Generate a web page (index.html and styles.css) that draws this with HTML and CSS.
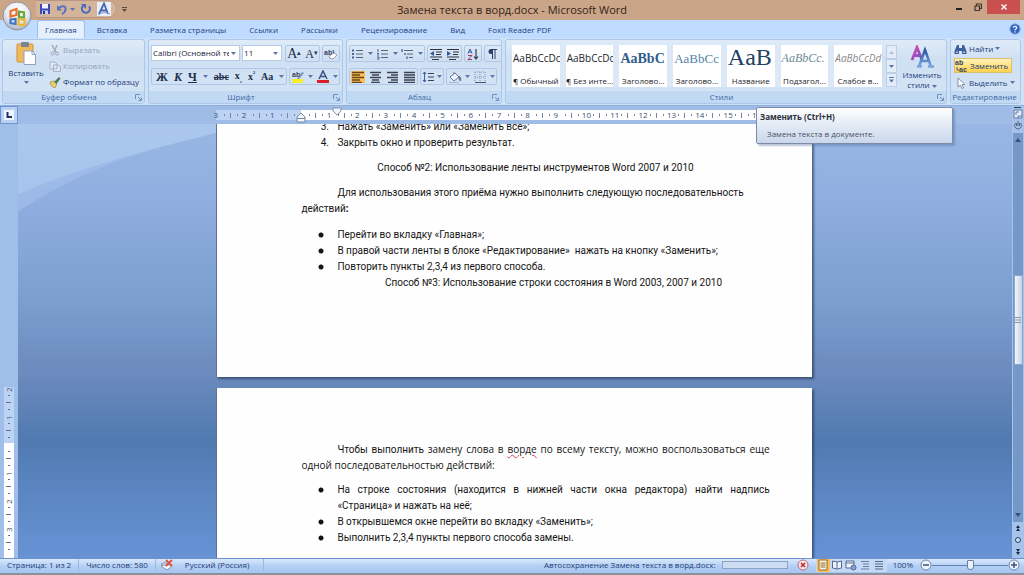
FILE: index.html
```html
<!DOCTYPE html>
<html lang="ru">
<head>
<meta charset="utf-8">
<title>Замена текста в ворд.docx - Microsoft Word</title>
<link rel="stylesheet" href="styles.css">
</head>
<body>
<svg class="defs" aria-hidden="true">
  <defs>
    <linearGradient id="purple" x1="0" y1="0" x2="1" y2="1"><stop offset="0" stop-color="#d846b4"/><stop offset="1" stop-color="#6a55c0"/></linearGradient>
    <linearGradient id="blue" x1="0" y1="0" x2="0" y2="1"><stop offset="0" stop-color="#2a56a8"/><stop offset="1" stop-color="#7ba6e0"/></linearGradient>
    <radialGradient id="orb" cx=".5" cy=".3" r=".7"><stop offset="0" stop-color="#ffffff"/><stop offset=".6" stop-color="#e6e8ee"/><stop offset="1" stop-color="#a9b0c0"/></radialGradient>
    <symbol id="caret" viewBox="0 0 5 3"><path d="M0 0h5L2.500 3z" fill="#5876a6"/></symbol>
    <symbol id="launch" viewBox="0 0 7 7"><path d="M.5 5V.5H5M3 3l3 3M6.500 3.500v3h-3" fill="none" stroke="#6f8fbd"/></symbol>
  </defs>
</svg>

<header class="titlebar">
  <button class="office" aria-label="Кнопка Office">
    <svg viewBox="0 0 30 30" width="30" height="30"><circle cx="15" cy="15" r="14" fill="url(#orb)" stroke="#8f93a3"/><g fill="none" stroke-width="2.200"><path d="M8.500 10l6-2v6l-6 1.500z" stroke="#e8702c"/><path d="M17 10.500l5 1v5l-5-.5z" stroke="#6aa53c"/><path d="M8.500 18.500l5-.5v5l-5-1z" stroke="#3c76c8"/><path d="M16.500 18l6 1v5l-6-.5z" stroke="#eeb62c"/></g></svg>
  </button>
  <div class="quick">
    <button aria-label="Сохранить"><svg viewBox="0 0 12 12" width="12" height="12"><path d="M1 1h10v10H1z" fill="#3c48b4"/><path d="M3 1h6v4.500H3z" fill="#eef3ff"/><path d="M3 7.500h6V11H3z" fill="#c9d2f0"/><path d="M4 8h2v3H4z" fill="#2b3488"/></svg></button>
    <button aria-label="Отменить" class="undo"><svg viewBox="0 0 12 12" width="12" height="12"><path d="M3 5c3-3 7-2 6.500 1.500C9.300 8.500 8 10 6 11" fill="none" stroke="#5a72c4" stroke-width="2"/><path d="M1 2v5.500h5z" fill="#5a72c4"/></svg><svg width="5" height="3"><use href="#caret"/></svg></button>
    <button aria-label="Повторить"><svg viewBox="0 0 12 12" width="12" height="12"><path d="M3 3a4 4 0 1 0 6 .3" fill="none" stroke="#4a68bd" stroke-width="2"/><path d="M1 1h5v5z" fill="#4a68bd"/></svg></button>
    <button aria-label="Стиль" class="on"><svg viewBox="0 0 14 14" width="14" height="14"><path d="M2 12L7 1.500 11 12M4 8.500h6" fill="none" stroke="#4468b0" stroke-width="1.800"/><path d="M1 13c4-3 8-3 12-1" fill="none" stroke="#7f9fd0"/></svg></button>
  </div>
  <button class="more" aria-label="Настройка панели"><svg viewBox="0 0 5 5" width="5" height="5"><path d="M0 .5h5" stroke="#5b4a44"/><path d="M0 2h5L2.500 5z" fill="#5b4a44"/></svg></button>
  <h1>Замена текста в ворд.docx - Microsoft Word</h1>
  <div class="winbtns">
    <button aria-label="Свернуть"><svg viewBox="0 0 8 8" width="8" height="8"><path d="M1 6h6" stroke="#222" stroke-width="2"/></svg></button>
    <button aria-label="Восстановить"><svg viewBox="0 0 8 8" width="8" height="8"><path d="M1 3h4.500v4.500H1zM2.500 3V1h5v4.500h-2" fill="none" stroke="#42352e" stroke-width="1.200"/></svg></button>
    <button aria-label="Закрыть" class="close"><svg viewBox="0 0 8 8" width="8" height="8"><path d="M1.500 1.500l5 5m0-5l-5 5" stroke="#fff" stroke-width="1.400"/></svg></button>
  </div>
</header>

<nav class="tabs">
  <a href="#" class="active">Главная</a><a href="#">Вставка</a><a href="#">Разметка страницы</a><a href="#">Ссылки</a><a href="#">Рассылки</a><a href="#">Рецензирование</a><a href="#">Вид</a><a href="#">Foxit Reader PDF</a>
  <button class="help" aria-label="Справка"><svg viewBox="0 0 12 12" width="12" height="12"><circle cx="6" cy="6" r="5.200" fill="#3465c0" stroke="#8fb0e6"/><path d="M4.300 4.800C4.300 2.800 8 2.900 7.700 5 7.500 6 6 6 6 7.300M6 8.200v1.200" fill="none" stroke="#fff" stroke-width="1.200"/></svg></button>
</nav>

<main class="ribbon">
  <section class="group">
    <div class="body clip">
      <button class="paste"><svg viewBox="0 0 20 23" width="20" height="23"><rect x="1" y="2" width="16" height="18" rx="1" fill="#f0b95a" stroke="#cf9238"/><rect x="5" y="0" width="8" height="5" rx="1" fill="#7b8494"/><path d="M8 9h8l3.500 3.500V22.500H8z" fill="#fff" stroke="#8ba2c8"/><path d="M16 9v3.500h3.500" fill="none" stroke="#8ba2c8"/></svg><span>Вставить</span><svg width="5" height="3"><use href="#caret"/></svg></button>
      <div class="stack">
        <button class="off"><svg viewBox="0 0 12 12" width="12" height="12"><path d="M3 1l4 7M8 1L5 8" stroke="#9ca7b8" stroke-width="1.300"/><circle cx="3.500" cy="9.500" r="1.500" fill="none" stroke="#9ca7b8"/><circle cx="8" cy="9.500" r="1.500" fill="none" stroke="#9ca7b8"/></svg>Вырезать</button>
        <button class="off"><svg viewBox="0 0 12 12" width="12" height="12"><path d="M1 2h5l2 2v5H1zM4.500 5h5l2 2v4.500h-7z" fill="#dfe8f4" stroke="#a5b3c8"/></svg>Копировать</button>
        <button><svg viewBox="0 0 12 12" width="12" height="12"><path d="M1 6l4-1 3 3-2 4C3 11 1 9 1 6z" fill="#e9cf6a" stroke="#9a8644" stroke-width=".7"/><path d="M5 6l5-5 1.500 1.500L7.500 8z" fill="#4f7a55"/></svg>Формат по образцу</button>
      </div>
    </div>
    <footer><span>Буфер обмена</span><svg width="7" height="7"><use href="#launch"/></svg></footer>
  </section>

  <section class="group">
    <div class="body rows">
      <div class="row">
        <span class="combo face"><select aria-label="Шрифт"><option>Calibri (Основной текст)</option></select><svg width="5" height="3"><use href="#caret"/></svg></span>
        <span class="combo size"><select aria-label="Размер"><option>11</option></select><svg width="5" height="3"><use href="#caret"/></svg></span>
        <span class="set push"><button class="serif big" aria-label="Увеличить размер">A<sup>▴</sup></button><button class="serif" aria-label="Уменьшить размер">A<sup>▾</sup></button></span>
        <span class="set"><button aria-label="Очистить формат"><svg viewBox="0 0 14 12" width="14" height="12"><text x="0" y="7" class="tiny">ab)</text><path d="M5 8l5-3 3 2-4 4-3-.5z" fill="#fff" stroke="#8390a8" stroke-width=".8"/></svg></button></span>
      </div>
      <div class="row">
        <span class="set wide"><button class="serif"><b>Ж</b></button><button class="serif"><b><i class="slant">К</i></b></button><button class="serif"><b><u>Ч</u></b></button><svg width="5" height="3"><use href="#caret"/></svg><button class="serif small"><b><s>abc</s></b></button><button class="serif small"><b>x<sub>₂</sub></b></button><button class="serif small"><b>x<sup>²</sup></b></button><button class="serif small"><b>Aa</b></button><svg width="5" height="3"><use href="#caret"/></svg></span>
        <span class="set"><button aria-label="Цвет выделения"><svg viewBox="0 0 14 13" width="14" height="13"><path d="M1 9h11v4H1z" fill="#f5ee2c"/><text x="1" y="7" class="tiny">ab</text><path d="M6 9l5-7 2 1-5 6z" fill="#7d92b8"/></svg></button><svg width="5" height="3"><use href="#caret"/></svg><button aria-label="Цвет текста"><svg viewBox="0 0 14 13" width="14" height="13"><path d="M1 10h12v3H1z" fill="#d8202c"/><path d="M3 9l4-8 4 8M4.500 6.500h5" fill="none" stroke="#3c5384" stroke-width="1.500"/></svg></button><svg width="5" height="3"><use href="#caret"/></svg></span>
      </div>
    </div>
    <footer><span>Шрифт</span><svg width="7" height="7"><use href="#launch"/></svg></footer>
  </section>

  <section class="group">
    <div class="body rows">
      <div class="row">
        <span class="set"><button aria-label="Маркеры"><svg viewBox="0 0 14 12" width="14" height="12"><path d="M1 2.500h2M1 6h2M1 9.500h2" stroke="#44609c" stroke-width="2"/><path d="M5 2.500h7M5 6h7M5 9.500h7" stroke="#5a6478"/></svg></button><svg width="5" height="3"><use href="#caret"/></svg><button aria-label="Нумерация"><svg viewBox="0 0 14 12" width="14" height="12"><path d="M2 1v3M1 5.500h2M1 7h2M1 9h2v2H1" fill="none" stroke="#44609c"/><path d="M5 2.500h7M5 6h7M5 9.500h7" stroke="#5a6478"/></svg></button><svg width="5" height="3"><use href="#caret"/></svg><button aria-label="Многоуровневый список"><svg viewBox="0 0 14 12" width="14" height="12"><path d="M1 1v3M4 5v2M6 8.500v2.500" stroke="#44609c" stroke-width="1.300"/><path d="M3 2.500h9M6 6h6M8 9.500h4" stroke="#5a6478"/></svg></button><svg width="5" height="3"><use href="#caret"/></svg></span>
        <span class="set"><button aria-label="Уменьшить отступ"><svg viewBox="0 0 14 12" width="14" height="12"><path d="M1 1.500h12M7 4h6M7 6.500h5M1 9h12M3 11.500h7" stroke="#2e3440" stroke-width="1.200"/><path d="M5 3v5L1 5.500z" fill="#36569c"/></svg></button><button aria-label="Увеличить отступ"><svg viewBox="0 0 14 12" width="14" height="12"><path d="M1 1.500h12M7 4h6M7 6.500h5M1 9h12M3 11.500h7" stroke="#2e3440" stroke-width="1.200"/><path d="M1 3v5l4-2.500z" fill="#36569c"/></svg></button></span>
        <span class="set"><button aria-label="Сортировка"><svg viewBox="0 0 14 12" width="14" height="12"><path d="M2 5.500L4 1l2 4.500M2.500 4h3" fill="none" stroke="#3c5cae"/><path d="M2 7.500h4L2 11.500h4" fill="none" stroke="#a03c5c"/><path d="M10 1v10M8 8.500l2 2.500 2-2.500" fill="none" stroke="#2e3c58" stroke-width="1.200"/></svg></button></span>
        <span class="set"><button aria-label="Непечатаемые знаки"><svg viewBox="0 0 14 12" width="14" height="12"><path d="M7 1H5a2.500 2.500 0 0 0 0 5h1.500z" fill="#2c4068"/><path d="M6.500 1v10M9 1v10M6 1.500h5" stroke="#2c4068"/></svg></button></span>
      </div>
      <div class="row">
        <span class="set"><button class="hot" aria-label="По левому краю"><svg viewBox="0 0 14 12" width="14" height="12"><path d="M1 1.500h12M1 4h8M1 6.500h12M1 9h8M1 11.500h10" stroke="#6a4714" stroke-width="1.400"/></svg></button><button aria-label="По центру"><svg viewBox="0 0 14 12" width="14" height="12"><path d="M2 1.500h11M4 4h7M2 6.500h11M4 9h7M3 11.500h9" stroke="#3a4150" stroke-width="1.300"/></svg></button><button aria-label="По правому краю"><svg viewBox="0 0 14 12" width="14" height="12"><path d="M2 1.500h11M6 4h7M2 6.500h11M6 9h7M3 11.500h10" stroke="#3a4150" stroke-width="1.300"/></svg></button><button aria-label="По ширине"><svg viewBox="0 0 14 12" width="14" height="12"><path d="M2 1.500h11M2 4h11M2 6.500h11M2 9h11M2 11.500h11" stroke="#3a4150" stroke-width="1.300"/></svg></button></span>
        <span class="set"><button aria-label="Интервал"><svg viewBox="0 0 12 12" width="12" height="12"><path d="M2.500 1v10M1 3l1.500-2L4 3M1 9l1.500 2L4 9" fill="none" stroke="#3c5ca0"/><path d="M6 2.500h6M6 6h6M6 9.500h6" stroke="#3a4150" stroke-width="1.200"/></svg></button><svg width="5" height="3"><use href="#caret"/></svg></span>
        <span class="set"><button aria-label="Заливка"><svg viewBox="0 0 14 12" width="14" height="12"><path d="M2 6l5-4 4 4-5 4z" fill="#eef2fa" stroke="#66789c"/><path d="M6 3V1M11 5c2 1 2 3 1.500 5-1-1-2-2-1.500-5z" fill="#66789c" stroke="#66789c"/><path d="M1 11.500h10" stroke="#a9b7cf"/></svg></button><svg width="5" height="3"><use href="#caret"/></svg><button aria-label="Границы"><svg viewBox="0 0 14 12" width="14" height="12"><path d="M2 1h10v10M2 1v10M7 1v10M2 6h10" fill="none" stroke="#7f91b2" stroke-dasharray="1 1"/><path d="M2 11.500h11" stroke="#43557c"/></svg></button><svg width="5" height="3"><use href="#caret"/></svg></span>
      </div>
    </div>
    <footer><span>Абзац</span><svg width="7" height="7"><use href="#launch"/></svg></footer>
  </section>

  <section class="group">
    <div class="body styles">
      <div class="gallery">
        <button><span class="sample">AaBbCcDc</span><span>¶ Обычный</span></button>
        <button><span class="sample">AaBbCcDc</span><span>¶ Без инте...</span></button>
        <button><span class="sample head1">AaBbC</span><span>Заголово...</span></button>
        <button><span class="sample head2">AaBbCc</span><span>Заголово...</span></button>
        <button><span class="sample title">AaB</span><span>Название</span></button>
        <button><span class="sample subtitle">AaBbCc.</span><span>Подзагол...</span></button>
        <button><span class="sample faint">AaBbCcDd</span><span>Слабое в...</span></button>
      </div>
      <div class="spin"><button aria-label="Вверх"><svg viewBox="0 0 5 3" width="5" height="3"><path d="M0 3h5L2.500 0z" fill="#b4bccb"/></svg></button><button aria-label="Вниз"><svg width="5" height="3"><use href="#caret"/></svg></button><button aria-label="Все стили"><svg viewBox="0 0 5 6" width="5" height="6"><path d="M0 .5h5" stroke="#5876a6"/><path d="M0 2.500h5L2.500 5.500z" fill="#5876a6"/></svg></button></div>
      <button class="change"><svg viewBox="0 0 24 24" width="24" height="24"><path d="M2 15L7 2.500 12 15M4 10.500h6" fill="none" stroke="url(#purple)" stroke-width="2.800"/><path d="M9 21.500L15 5l6 16.500M11 16h8M7 21.500h5M18 21.500h6" fill="none" stroke="url(#blue)" stroke-width="2.500"/></svg><span>Изменить<br>стили <svg width="5" height="3"><use href="#caret"/></svg></span></button>
    </div>
    <footer><span>Стили</span><svg width="7" height="7"><use href="#launch"/></svg></footer>
  </section>

  <section class="group">
    <div class="body stack edit">
      <button><svg viewBox="0 0 13 12" width="13" height="12"><path d="M3 2h2v3h3V2h2l2.500 6v3H8V8H5v3H.5V8z" fill="#3f5f9c"/><path d="M2 8.500h2v1.500H2zM9 8.500h2v1.500H9z" fill="#a7c0e8"/></svg>Найти<svg width="5" height="3"><use href="#caret"/></svg></button>
      <button class="hover"><svg viewBox="0 0 13 12" width="13" height="12"><text x="0" y="5" class="tiny">ab</text><text x="4" y="12" class="tiny">ac</text><path d="M2 7v3h2" fill="none" stroke="#3c5ca0"/></svg>Заменить</button>
      <button><svg viewBox="0 0 13 12" width="13" height="12"><path d="M4 1v9l2.300-2L8 11.500l1.500-.7L8 7.500h3z" fill="#fff" stroke="#6b7d9e" stroke-width=".8"/></svg>Выделить<svg width="5" height="3"><use href="#caret"/></svg></button>
    </div>
    <footer><span>Редактирование</span></footer>
  </section>

  <aside class="tip" role="tooltip"><strong>Заменить (Ctrl+H)</strong><p>Замена текста в документе.</p></aside>
</main>

<div class="work">
  <div class="leftcol">
    <button class="tabstop" aria-label="Табуляция"><svg viewBox="0 0 10 10" width="10" height="10"><path d="M0 0h10v10H0z" fill="#eef5ff"/><path d="M3.500 2v5H8" fill="none" stroke="#1c3566" stroke-width="2"/></svg></button>
    <div class="vruler"><i class="in">2</i><i class="in">1</i><i></i><i>1</i><i>2</i><i>3</i><i></i></div>
  </div>
  <div class="center">
    <div class="rulerrow">
      <div class="hruler">
        <i class="in">3</i><i class="in">2</i><i class="in">1</i><i class="zero"></i><i>1</i><i>2</i><i>3</i><i>4</i><i>5</i><i>6</i><i>7</i><i>8</i><i>9</i><i>10</i><i>11</i><i>12</i><i>13</i><i>14</i><i>15</i><i>16</i><i>17</i>
        <svg class="marks" viewBox="0 0 50 16" width="50" height="16"><path d="M40 1h8v3l-4 4-4-4z" fill="#f1f5fb" stroke="#8694ab"/><path d="M4 15v-5l4-4 4 4v5zM4 11.500h8" fill="#f1f5fb" stroke="#7586a3"/></svg>
      </div>
    </div>
    <div class="canvas">
      <svg class="swoosh" viewBox="0 0 198 90" width="198" height="90"><path d="M0 0h198v9C130 26 60 44 0 71z" fill="#b4d0f1" opacity=".65"/><path d="M198 9C130 26 60 44 0 71v17C50 54 110 28 198 9z" fill="#a5c0ec" opacity=".6"/></svg>
      <article class="page first">
        <ol start="3"><li>Нажать «Заменить» или «Заменить все»;</li><li>Закрыть окно и проверить результат.</li></ol>
        <p class="mid">Способ №2: Использование ленты инструментов Word 2007 и 2010</p>
        <p class="indent">Для использования этого приёма нужно выполнить следующую последовательность действий<b>:</b></p>
        <ul><li>Перейти во вкладку «Главная»;</li><li>В правой части ленты в блоке «Редактирование»&nbsp; нажать на кнопку «Заменить»;</li><li>Повторить пункты 2,3,4 из первого способа.</li></ul>
        <p class="mid shifted">Способ №3: Использование строки состояния в Word 2003, 2007 и 2010</p>
      </article>
      <article class="page second">
        <p class="indent just">Чтобы выполнить <span class="pasted">замену слова в <span class="typo">ворде</span> по всему тексту, можно воспользоваться еще одной последовательностью действий:</span></p>
        <ul><li class="just">На строке состояния (находится в нижней части окна редактора) найти надпись «Страница» и нажать на неё;</li><li>В открывшемся окне перейти во вкладку «Заменить»;</li><li>Выполнить 2,3,4 пункты первого способа замены.</li></ul>
      </article>
    </div>
  </div>
  <div class="scroll">
    <button aria-label="Разделить"><svg viewBox="0 0 10 3" width="10" height="3"><path d="M1 1.500h7" stroke="#2a4068"/></svg></button>
    <button aria-label="Линейка"><svg viewBox="0 0 10 10" width="10" height="10"><path d="M1 1h8v8H1z" fill="#e9f0fb" stroke="#61779f"/><path d="M3 6V3h3M5 9V7h4" fill="none" stroke="#61779f"/></svg></button>
    <button aria-label="Выбор"><svg viewBox="0 0 10 12" width="10" height="12"><path d="M2.500 4a3.500 3.500 0 1 0 5 0M5 2v5M3.500 4v3M6.500 4v3" fill="none" stroke="#53647f"/></svg></button>
    <div class="track"><svg viewBox="0 0 6 4" width="6" height="4"><path d="M0 4h6L3 0z" fill="#35527f"/></svg><div class="thumb"><svg viewBox="0 0 6 6" width="6" height="6"><path d="M0 .5h6M0 3h6M0 5.500h6" stroke="#8394ad"/></svg></div><svg viewBox="0 0 6 4" width="6" height="4"><path d="M0 0h6L3 4z" fill="#35527f"/></svg></div>
    <button aria-label="Предыдущая страница"><svg viewBox="0 0 6 12" width="6" height="12"><path d="M1 6l2-3 2 3zM1 9l2-3 2 3z" fill="#16294c"/></svg></button>
    <button aria-label="Объект перехода"><svg viewBox="0 0 8 12" width="8" height="12"><circle cx="4" cy="6" r="2.500" fill="#cfe0f6" stroke="#2a3e64"/></svg></button>
    <button aria-label="Следующая страница"><svg viewBox="0 0 6 12" width="6" height="12"><path d="M1 3l2 3 2-3zM1 6l2 3 2-3z" fill="#16294c"/></svg></button>
  </div>
</div>

<footer class="status">
  <span class="cell">Страница: 1 из 2</span><span class="cell">Число слов: 580</span>
  <button aria-label="Правописание"><svg viewBox="0 0 14 12" width="14" height="12"><path d="M1 7l5-2 6 2-5 4z" fill="#fff" stroke="#7b8fb4"/><path d="M1 5l5-2v4z" fill="#c4d4ee" stroke="#7b8fb4" stroke-width=".6"/><path d="M6 1l6 6m0-6L6 7" stroke="#e0523c" stroke-width="1.800"/></svg></button>
  <span class="cell lang">Русский (Россия)</span>
  <label class="save" for="saving">Автосохранение Замена текста в ворд.docx:</label>
  <progress id="saving" value="0" max="100"></progress>
  <button class="stop" aria-label="Отменить сохранение"><svg viewBox="0 0 12 12" width="12" height="12"><circle cx="6" cy="6" r="5" fill="#f6e3e6" stroke="#b0707c"/><path d="M4 4l4 4m0-4L4 8" stroke="#c02c34" stroke-width="1.600"/></svg></button>
  <div class="views">
    <button class="hot" aria-label="Разметка страницы"><svg viewBox="0 0 12 12" width="12" height="12"><path d="M2 1h8v10H2z" fill="#fff7dc" stroke="#8d6a2c"/><path d="M3.500 4h5M3.500 6h5M3.500 8h5" stroke="#8d6a2c"/></svg></button>
    <button aria-label="Чтение"><svg viewBox="0 0 12 12" width="12" height="12"><path d="M6 3v7M6 3L1.500 2v7L6 10l4.500-1V2z" fill="#eef4fd" stroke="#55698e"/></svg></button>
    <button aria-label="Веб-документ"><svg viewBox="0 0 12 12" width="12" height="12"><path d="M1 2h8v7H1zM1 4h8" fill="#eef4fd" stroke="#55698e"/><circle cx="8.500" cy="8.500" r="2.500" fill="#7ea2d8" stroke="#55698e"/></svg></button>
    <button aria-label="Структура"><svg viewBox="0 0 12 12" width="12" height="12"><path d="M2 2.500h8M4 5h6M4 7.500h6M2 10h8" stroke="#6f80a0"/></svg></button>
    <button aria-label="Черновик"><svg viewBox="0 0 12 12" width="12" height="12"><path d="M2 2.500h8M2 5h8M2 7.500h8M2 10h8" stroke="#55698e"/></svg></button>
  </div>
  <button class="pct">100%</button>
  <button aria-label="Уменьшить"><svg viewBox="0 0 12 12" width="12" height="12"><circle cx="6" cy="6" r="5" fill="#edf4fe" stroke="#6d84ab"/><path d="M3 6h6" stroke="#3c5078" stroke-width="1.500"/></svg></button>
  <input type="range" aria-label="Масштаб" min="10" max="190" value="100">
  <button aria-label="Увеличить"><svg viewBox="0 0 12 12" width="12" height="12"><circle cx="6" cy="6" r="5" fill="#edf4fe" stroke="#6d84ab"/><path d="M3 6h6M6 3v6" stroke="#3c5078" stroke-width="1.500"/></svg></button>
</footer>
</body>
</html>
```
FILE: styles.css
```css
* { box-sizing: border-box; }
body { margin: 0; height: 100vh; display: flex; flex-direction: column; overflow: hidden; font: 8px/12px "Open Sans", "Noto Sans", sans-serif; color: #1d3c78; background: #9ebce6; }
button, select { font: inherit; color: inherit; background: none; border: 0; padding: 0; margin: 0; }
button { display: flex; align-items: center; justify-content: center; white-space: nowrap; }
svg { flex: none; }
p, ol, ul { margin: 0; padding: 0; }
i { font-style: normal; }
.slant { font-style: italic; }
.defs { position: absolute; width: 0; height: 0; }
.tiny { font: bold 7px "Liberation Sans", sans-serif; fill: #33425f; }

.titlebar { position: relative; z-index: 3; display: flex; align-items: flex-start; height: 20px; padding-left: 36px; background: #cba587; flex: none; }
.office { position: absolute; left: 2px; top: 1px; }
.quick { display: flex; align-items: center; gap: 5px; height: 18px; padding: 0 5px 0 3px; border: 1px solid #b99784; border-left: 0; border-radius: 0 9px 9px 0; background: #d5b49c; }
.undo { gap: 2px; }
.on { background: #e9eefa; }
.more { height: 18px; padding: 0 5px; }
.titlebar h1 { position: absolute; left: 0; right: 0; top: 2px; margin: 0; text-align: center; font-size: 11px; line-height: 16px; font-weight: 400; color: #33231a; pointer-events: none; }
.winbtns { display: flex; margin-left: auto; padding-right: 4px; }
.winbtns button { width: 19px; height: 14px; }
.winbtns .close { width: 33px; background: #c9504e; }

.tabs { display: flex; gap: 1px; height: 18px; padding: 0 3px 0 37px; background: #bfdbff; flex: none; }
.tabs a { padding: 4px 11px 0; height: 18px; color: #1d4284; text-decoration: none; white-space: nowrap; }
.tabs .active { padding: 3px 7px 0; background: #e6f0fc; border: 1px solid #9dbde9; border-bottom: 0; border-radius: 3px 3px 0 0; }
.help { margin-left: auto; }

.ribbon { position: relative; z-index: 2; display: grid; grid-template-columns: 143px 195px 156px 1fr 71px; gap: 3px; height: 68px; padding: 1px 3px 1px 2px; background: #cfe1f7; border-bottom: 1px solid #8cb0df; flex: none; }
.group { display: flex; flex-direction: column; min-width: 0; border: 1px solid #abc8ea; border-radius: 3px; background: linear-gradient(#dfebf8, #d0e0f3 30%, #d3e4f6); overflow: hidden; }
.group .body { flex: 1; min-height: 0; }
.group > footer { display: flex; align-items: center; height: 12px; background: #c1d9f3; color: #4069a5; padding-right: 2px; }
.group > footer span { flex: 1; text-align: center; }
.clip { display: flex; padding: 2px 3px; gap: 3px; }
.paste { flex-direction: column; justify-content: flex-start; width: 40px; gap: 2px; }
.stack { display: flex; flex-direction: column; gap: 4px; padding-top: 2px; }
.stack button { gap: 2px; justify-content: flex-start; height: 12px; }
.stack .off { color: #98a5b8; }
.rows { display: flex; flex-direction: column; gap: 6px; padding: 5px 2px; }
.row { display: flex; gap: 2px; height: 17px; }
.combo { position: relative; display: flex; height: 16px; background: #fff; border: 1px solid #b4cbe8; color: #16233c; }
.combo select { appearance: none; width: 100%; padding: 0 0 0 1px; }
.combo svg { position: absolute; right: 3px; top: 6px; }
.combo.face select { margin-right: 10px; }
.face { width: 91px; }
.size { width: 41px; }
.set { display: flex; align-items: center; height: 17px; padding: 0 1px; gap: 3px; border: 1px solid #b0c7e5; border-radius: 2px; color: #22304b; }
.push { margin-left: 1px; gap: 4px; }
.set.wide { gap: 6px; padding: 0 2px 0 4px; }
.serif { font: 12px/14px "Liberation Serif", serif; }
.serif sup, .serif sub { font-size: 7px; line-height: 7px; }
.big { font-size: 14px; }
.small { font-size: 10px; }
.hot { background: #fbbd58; }

.styles { display: flex; padding: 5px 3px 4px 6px; gap: 4px; }
.gallery { flex: 1; min-width: 0; display: grid; grid-template-columns: repeat(7, 1fr); gap: 6px; background: #dce8f6; }
.gallery button { flex-direction: column; justify-content: space-between; align-items: stretch; min-width: 0; overflow: hidden; background: #fff; color: #22262e; text-align: center; }
.sample { height: 25px; line-height: 27px; padding-left: 1px; font-size: 10px; text-align: left; overflow: hidden; }
.head1 { font: bold 14px/27px "Liberation Serif", serif; color: #2f5c8c; }
.head2 { font: 13px/27px "Liberation Serif", serif; color: #5284a8; }
.title { font: 24px/24px "Liberation Serif", serif; color: #22405f; }
.subtitle { font: italic 12px/27px "Liberation Serif", serif; color: #6a8a96; }
.faint { font-style: italic; color: #878787; }
.spin { display: flex; flex-direction: column; width: 11px; }
.spin button { flex: 1; border: 1px solid #bed0e8; background: #e3edf9; }
.change { flex-direction: column; justify-content: flex-start; width: 42px; line-height: 10px; gap: 1px; }
.change span { display: block; }
.edit { padding: 2px 0 0 3px; gap: 3px; }
.edit button { height: 13px; }
.stack .hover { background: linear-gradient(#fff1b8, #ffd24d); border: 1px solid #dcbf6a; margin-right: 8px; height: 15px; }
.tip { position: absolute; right: 71px; top: 69px; width: 197px; height: 37px; padding: 3px; border: 1px solid #7d8ba5; border-radius: 2px; background: linear-gradient(#fdfeff, #c9d7ec); color: #4b5262; box-shadow: 2px 2px 2px #4a699466; }
.tip strong { display: block; color: #2c303a; }
.tip p { padding: 5px 0 0 7px; }

.work { flex: 1; display: flex; min-height: 0; }
.leftcol { width: 18px; display: flex; flex-direction: column; background: #9fbfe9; overflow: hidden; flex: none; }
.tabstop { height: 18px; border: 1px solid #6c93cf; background: #b8d2f5; flex: none; }
.vruler { margin: 263px 4px 0; }
.vruler i { display: flex; align-items: center; justify-content: flex-end; width: 10px; height: 28px; line-height: 10px; font-size: 8px; color: #3d5171; writing-mode: vertical-rl; transform: rotate(180deg); background: linear-gradient(#62738f, #62738f) 4px 5px / 2px 1px no-repeat, linear-gradient(#62738f, #62738f) 3px 12px / 5px 1px no-repeat, linear-gradient(#62738f, #62738f) 4px 19px / 2px 1px no-repeat, #fff; }
.vruler .in { background-color: #bcd3f4; }
.center { flex: 1; min-width: 0; display: flex; flex-direction: column; }
.rulerrow { height: 18px; padding-right: 2px; background: #9ebce6; display: flex; justify-content: center; flex: none; }
.hruler { position: relative; display: grid; grid-template-columns: repeat(21, 1fr); width: 60%; height: 10px; margin-top: 4px; }
.hruler i { text-indent: -3px; line-height: 10px; font-size: 8px; color: #3d5171; background: linear-gradient(#75859f, #75859f) 8px 4px / 1px 2px no-repeat, linear-gradient(#75859f, #75859f) 14px 3px / 1px 5px no-repeat, linear-gradient(#75859f, #75859f) 21px 4px / 1px 2px no-repeat, #fff; }
.hruler .in { background-color: #bcd3f4; }
.marks { position: absolute; left: 77px; top: -3px; }
.canvas { position: relative; flex: 1; min-height: 0; padding-right: 2px; overflow: hidden; display: flex; flex-direction: column; align-items: center; gap: 11px; background: linear-gradient(#98b7e4, #8fafe0 17%, #7c9fd0 40%, #6b8abd 58%, #507ab0 73%, #5c87c3 86%, #6793d6); }
.swoosh { position: absolute; left: 0; top: 0; }
.page { position: relative; width: 60%; flex: none; padding: 0 42px 0 84px; background: #fefefe; border-left: 1px solid #5f7391; box-shadow: 2px 2px 2px #20304c99; color: #151515; font: 10px/16px Roboto, "Open Sans", sans-serif; }
.first { padding-bottom: 86px; overflow: hidden; }
.first ol { margin-top: -5px; }
.second { padding-top: 54px; flex: 1 0 auto; }
.page ul { list-style: none; }
.page ul li { margin-left: 17px; padding-left: 19px; background: radial-gradient(circle, #151515 2px, transparent 3px) 0 5px / 6px 6px no-repeat; }
.page ol li { padding-left: 6px; margin-left: 30px; }
.first ul { margin-top: 10px; }
.second ul { margin-top: 8px; }
.mid { text-align: center; }
ol + .mid, .mid + .indent { margin-top: 9px; }
.shifted { padding-left: 36px; }
.indent { text-indent: 36px; }
.just { text-align: justify; }
.pasted { font-family: "Open Sans", sans-serif; line-height: 1; }
.typo { text-decoration: underline wavy #d8414b 1px; }

.scroll { width: 12px; display: flex; flex-direction: column; align-items: center; background: #a6c3ec; flex: none; }
.track { flex: 1; align-self: stretch; margin: 2px 1px 0; display: flex; flex-direction: column; align-items: center; padding: 5px 0; background: #7698c8; }
.thumb { width: 9px; height: 90px; margin: 133px 0 auto; display: flex; align-items: center; justify-content: center; border: 1px solid #8fa5c6; background: linear-gradient(90deg, #f3f7fd, #c3d2e8); }

.status { display: flex; align-items: center; height: 17px; padding: 0 4px 2px 0; background: linear-gradient(#d9e8fc, #b4cff4 50%, #a6c5f0); border-top: 1px solid #6e93cb; border-bottom: 2px solid #8a919c; white-space: nowrap; flex: none; }
.cell { padding: 0 7px; border-right: 1px solid #9ab8e2; }
.status > button { margin-left: 4px; }
.lang { padding: 0 14px 0 11px; }
.save { margin-left: auto; }
progress { appearance: none; width: 66px; height: 8px; margin: 0 4px 0 6px; border: 1px solid #8aa2c4; background: #cddcf0; }
progress::-webkit-progress-bar { background: #cddcf0; }
.status .stop { margin: 0 7px 0 5px; }
.views { display: flex; gap: 1px; padding: 0 1px; background: #c4d9f6; }
.views button { width: 13px; height: 13px; }
.status .pct { margin: 0 3px 0 6px; }
input[type=range] { appearance: none; width: 76px; height: 12px; margin: 0 -4px 0 0; background: linear-gradient(#6380b0, #6380b0) center / 100% 1px no-repeat; }
input[type=range]::-webkit-slider-thumb { appearance: none; width: 7px; height: 10px; border: 1px solid #6a7f9f; border-radius: 1px 1px 3px 3px; background: #e9f1fc; }
```
